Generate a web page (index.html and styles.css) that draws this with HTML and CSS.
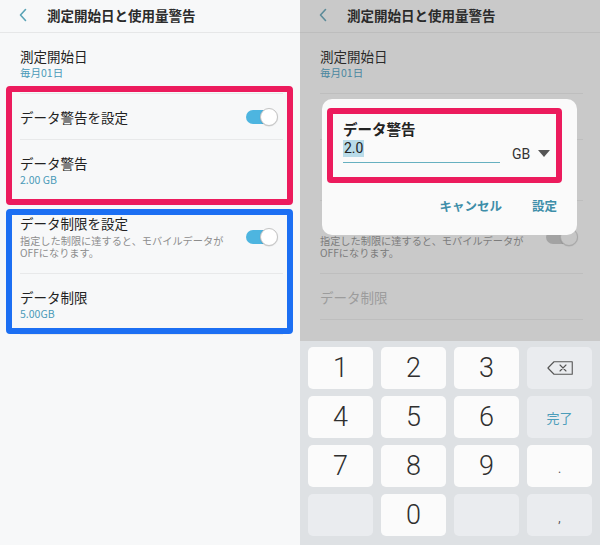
FILE: index.html
```html
<!DOCTYPE html>
<html lang="ja">
<head>
<meta charset="utf-8">
<title>測定開始日と使用量警告</title>
<link rel="stylesheet" href="styles.css">
</head>
<body>
<div class="screen">
  <section class="panel panel-left">
    <header class="appbar">
      <svg class="back" width="10" height="14" viewBox="0 0 10 14"><path d="M7.5 1.5 L2.5 7 L7.5 12.5" fill="none" stroke="currentColor" stroke-width="1.6" stroke-linecap="round" stroke-linejoin="round"/></svg>
      <h1 class="appbar-title">測定開始日と使用量警告</h1>
    </header>
    <ul class="list">
      <li class="row row-two">
        <div class="row-text"><div class="ttl">測定開始日</div><div class="sub">毎月01日</div></div>
      </li>
      <li class="row row-one">
        <div class="row-text"><div class="ttl">データ警告を設定</div></div>
        <span class="toggle"><span class="knob"></span></span>
      </li>
      <li class="row row-two">
        <div class="row-text"><div class="ttl">データ警告</div><div class="sub">2.00 GB</div></div>
      </li>
      <li class="row row-desc">
        <div class="row-text"><div class="ttl">データ制限を設定</div><div class="desc">指定した制限に達すると、モバイルデータが<br>OFFになります。</div></div>
        <span class="toggle"><span class="knob"></span></span>
      </li>
      <li class="row row-two">
        <div class="row-text"><div class="ttl">データ制限</div><div class="sub">5.00GB</div></div>
      </li>
    </ul>
    <div class="mark mark-pink mark-warn"></div>
    <div class="mark mark-blue mark-limit"></div>
  </section>

  <section class="panel panel-right">
    <header class="appbar">
      <svg class="back" width="10" height="14" viewBox="0 0 10 14"><path d="M7.5 1.5 L2.5 7 L7.5 12.5" fill="none" stroke="currentColor" stroke-width="1.6" stroke-linecap="round" stroke-linejoin="round"/></svg>
      <h1 class="appbar-title">測定開始日と使用量警告</h1>
    </header>
    <ul class="list">
      <li class="row row-two">
        <div class="row-text"><div class="ttl">測定開始日</div><div class="sub">毎月01日</div></div>
      </li>
      <li class="row row-one">
        <div class="row-text covered"><div class="ttl">データ警告を設定</div></div>
        <span class="toggle covered"><span class="knob"></span></span>
      </li>
      <li class="row row-two">
        <div class="row-text covered"><div class="ttl">データ警告</div><div class="sub">2.00 GB</div></div>
      </li>
      <li class="row row-desc">
        <div class="row-text"><div class="ttl covered">データ制限を設定</div><div class="desc">指定した制限に達すると、モバイルデータが<br>OFFになります。</div></div>
        <span class="toggle"><span class="knob"></span></span>
      </li>
      <li class="row row-one row-disabled">
        <div class="row-text"><div class="ttl">データ制限</div></div>
      </li>
    </ul>

    <div class="dialog">
      <div class="dlg-title">データ警告</div>
      <div class="dlg-field">
        <div class="dlg-input"><span class="sel">2.0</span></div>
        <div class="dlg-unit">GB<svg class="caret" width="12" height="7" viewBox="0 0 12 7"><path d="M0 0 H12 L6 7 Z" fill="currentColor"/></svg></div>
      </div>
      <div class="dlg-actions">
        <span class="btn">キャンセル</span>
        <span class="btn">設定</span>
      </div>
      <div class="mark mark-pink mark-dialog"></div>
    </div>

    <div class="keyboard">
      <div class="key">1</div>
      <div class="key">2</div>
      <div class="key">3</div>
      <div class="key key-fn">
        <svg width="26" height="14" viewBox="0 0 26 14"><path d="M7 0.75 H25.25 V13.25 H7 L0.9 7 Z" fill="none" stroke="#555" stroke-width="1.1" stroke-linejoin="round"/><path d="M13 4 L19 10 M19 4 L13 10" stroke="#555" stroke-width="1.1" stroke-linecap="round"/></svg>
      </div>
      <div class="key">4</div>
      <div class="key">5</div>
      <div class="key">6</div>
      <div class="key key-fn key-done">完了</div>
      <div class="key">7</div>
      <div class="key">8</div>
      <div class="key">9</div>
      <div class="key key-punct">.</div>
      <div class="key key-fn"></div>
      <div class="key">0</div>
      <div class="key key-fn"></div>
      <div class="key key-fn key-punct">,</div>
    </div>
  </section>
</div>
</body>
</html>
```

FILE: styles.css
```css
* { box-sizing: border-box; }
html, body { margin: 0; padding: 0; }
body {
  font-family: "Noto Sans CJK JP", "Noto Sans", Roboto, sans-serif;
  color: #222;
  background: #f7f8f9;
}
.screen {
  display: flex;
  width: 600px;
  height: 545px;
  overflow: hidden;
}
.panel {
  position: relative;
  width: 300px;
  height: 545px;
  display: flex;
  flex-direction: column;
}
.panel-left { background: #f7f8f9; }
.panel-right { background: #c9c9c9; color: #2a2a2a; }

.appbar {
  height: 33px;
  flex: none;
  display: flex;
  align-items: center;
  padding: 0 0 2px 18px;
  border-bottom: 1px solid #e6e7e8;
}
.panel-right .appbar { border-bottom-color: #bdbdbd; }
.back { color: #5aa3b6; flex: none; }
.panel-right .back { color: #5c8b99; }
.appbar-title {
  margin: 0 0 0 19px;
  font-size: 13.5px;
  font-weight: 700;
  line-height: 18px;
  color: #2b2b2b;
}

.list { list-style: none; margin: 0; padding: 0; }
.row {
  display: flex;
  align-items: center;
  margin: 0 17px 0 20px;
  border-bottom: 1px solid #e8e9ea;
}
.panel-right .row { border-bottom-color: #bebebe; }
.row-two { height: 61px; padding-top: 1px; }
.row-one { height: 46px; }
.row-desc { height: 73px; padding-bottom: 1px; }
.row-text { flex: 1; }
.ttl { font-size: 13.5px; line-height: 18px; }
.sub { font-size: 10.5px; line-height: 16px; color: #4a9ab8; }
.panel-right .sub { color: #4a87a0; }
.desc {
  margin-top: 3px;
  font-size: 10.2px;
  line-height: 12.5px;
  color: #8d8d8d;
}
.panel-right .desc { color: #7c7c7c; }
.row-disabled .ttl { color: #9c9c9c; }
.covered { visibility: hidden; }

.toggle {
  position: relative;
  flex: none;
  width: 32px;
  height: 18px;
  margin-right: 5px;
}
.toggle::before {
  content: "";
  position: absolute;
  left: 0; top: 2px;
  width: 28px; height: 14px;
  border-radius: 7px;
  background: #4db5e0;
}
.knob {
  position: absolute;
  right: 0; top: 0;
  width: 18px; height: 18px;
  border-radius: 50%;
  background: #fff;
  border: 1px solid #c4c4c4;
  box-shadow: 0 0.5px 1px rgba(0,0,0,0.15);
}
.panel-right .toggle::before { background: #a3a3a3; }
.panel-right .knob { background: #c6c6c6; border-color: #a8a8a8; }

.mark {
  position: absolute;
  border-radius: 4px;
  pointer-events: none;
}
.mark-pink { border: 6px solid #ec1b5d; }
.mark-blue { border: 6px solid #1c6ff3; }
.mark-warn { left: 6px; top: 86px; width: 287px; height: 119px; }
.mark-limit { left: 6px; top: 209px; width: 287px; height: 125px; }

.dialog {
  position: absolute;
  left: 22px;
  top: 99px;
  width: 255px;
  height: 136px;
  padding: 21px 20px 0 21px;
  background: #fafafa;
  border-radius: 10px;
}
.mark-dialog { left: 5px; top: 9px; width: 235px; height: 75px; }
.dlg-title { font-size: 14.5px; font-weight: 700; line-height: 18px; color: #222; }
.dlg-field {
  display: flex;
  align-items: center;
  margin-top: 2px;
  height: 23px;
}
.dlg-input {
  width: 157px;
  height: 23px;
  border-bottom: 1.5px solid #66b0c0;
  font-family: Roboto, sans-serif;
  font-size: 14px;
  line-height: 17px;
}
.sel { display: inline-block; background: #b9dce9; color: #222; height: 17px; padding: 0 1px; }
.dlg-unit {
  margin-left: 12px;
  display: flex;
  align-items: center;
  gap: 8px;
  font-family: Roboto, sans-serif;
  font-size: 14px;
  color: #333;
  padding-top: 4px;
}
.caret { color: #555; }
.dlg-actions {
  display: flex;
  justify-content: flex-end;
  gap: 30px;
  margin-top: 35px;
}
.btn { font-size: 12.5px; font-weight: 700; line-height: 16px; color: #3e8ea9; }

.keyboard {
  margin-top: auto;
  height: 204px;
  flex: none;
  background: #dee1e4;
  padding: 6px 8px 9px;
  display: grid;
  grid-template-columns: repeat(4, 65px);
  grid-auto-rows: 42px;
  gap: 7px 8px;
}
.key {
  display: flex;
  align-items: center;
  justify-content: center;
  background: #fbfbfb;
  border-radius: 5px;
  font-family: Roboto, sans-serif;
  font-weight: 300;
  font-size: 27px;
  color: #2f2f2f;
}
.key-fn { background: #eaecef; }
.key-done { font-family: "Noto Sans CJK JP", sans-serif; font-weight: 400; font-size: 13px; color: #4c9dba; }
.key-punct { font-size: 12px; font-weight: 400; color: #555; padding-top: 6px; }
```
